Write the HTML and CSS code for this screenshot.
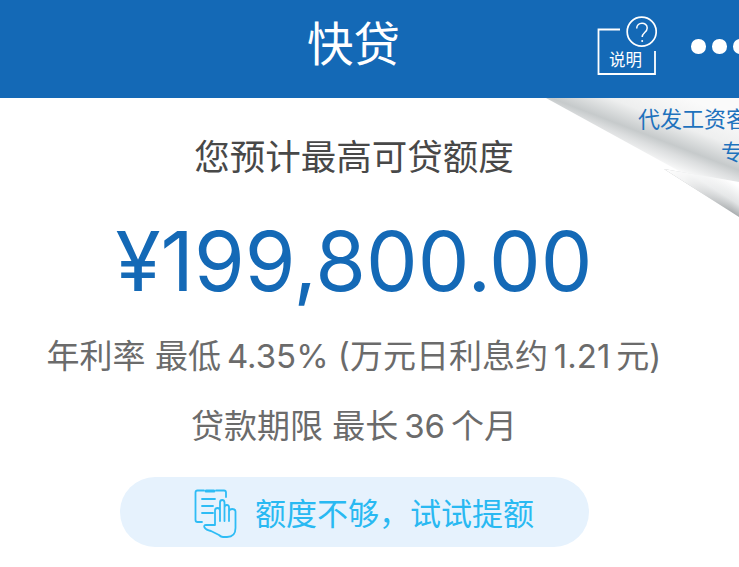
FILE: index.html
```html
<!DOCTYPE html>
<html lang="zh">
<head>
<meta charset="utf-8">
<title>快贷</title>
<link rel="stylesheet" href="styles.css">
</head>
<body>
<header class="bar">
  <h1 class="bar-title">快贷</h1>
  <div class="help">
    <svg class="help-icon" width="60" height="60" viewBox="0 0 60 60" fill="none" stroke="#fff">
      <path d="M23 13.500H1.500V58H58V35" stroke-width="1.800"/>
      <circle cx="44.700" cy="15.700" r="14.500" stroke-width="1.700"/>
      <path d="M39.700 12.500c0-7 10.500-7 10.500-.5 0 4.500-5 4.500-5 9" stroke-width="1.500"/>
      <circle cx="45.200" cy="25" r="1" fill="#fff" stroke="none"/>
    </svg>
    <span class="help-label">说明</span>
  </div>
  <div class="dots"><i></i><i></i><i></i></div>
</header>
<svg class="corner" width="193" height="125" viewBox="0 0 193 125">
  <defs>
    <linearGradient id="foldTop" gradientUnits="userSpaceOnUse" x1="114" y1="-10" x2="84" y2="68">
      <stop offset="0" stop-color="#fafafa"/>
      <stop offset=".33" stop-color="#eeefef"/>
      <stop offset=".58" stop-color="#c6cacb"/>
      <stop offset=".68" stop-color="#dcdedf"/>
      <stop offset=".88" stop-color="#fff"/>
    </linearGradient>
    <linearGradient id="foldLow" gradientUnits="userSpaceOnUse" x1="207" y1="97" x2="193" y2="119">
      <stop offset="0" stop-color="#fff"/>
      <stop offset=".6" stop-color="#e2e4e5"/>
      <stop offset="1" stop-color="#a9adaf"/>
    </linearGradient>
    <linearGradient id="foldFade" gradientUnits="userSpaceOnUse" x1="118" y1="0" x2="186" y2="0">
      <stop offset="0" stop-color="#fff"/>
      <stop offset=".3" stop-color="#fff" stop-opacity=".85"/>
      <stop offset="1" stop-color="#fff" stop-opacity="0"/>
    </linearGradient>
  </defs>
  <polygon points="0,0 193,0 193,106" fill="url(#foldTop)"/>
  <polygon points="118,71 193,84 193,119" fill="url(#foldLow)"/>
  <polygon points="118,71 193,84 193,119" fill="url(#foldFade)"/>
</svg>
<div class="corner-text">
  <p class="corner-line1">代发工资客户</p>
  <p class="corner-line2">专享</p>
</div>
<main class="content">
  <p class="lead">您预计最高可贷额度</p>
  <p class="amount">¥199,800.00</p>
  <p class="info info-rate">年利率 最低&#8201;4.35% (万元日利息约&#8201;1.21&#8201;元)</p>
  <p class="info info-term">贷款期限 最长&#8201;36&#8201;个月</p>
  <a class="raise">
    <svg class="raise-icon" width="44" height="50" viewBox="0 0 44 50" fill="none" stroke="#2ebcf5" stroke-width="1.800" stroke-linecap="round" stroke-linejoin="round">
      <path d="M10 1.500H3.500Q1.500 1.500 1.500 3.500V31Q1.500 33 3.500 33H8"/>
      <path d="M22 1.500H30Q32 1.500 32 3.500V8"/>
      <path d="M12 2H20" stroke-width="3"/>
      <path d="M8 10H21M8 17H19M8 24H19"/>
      <path d="M21 36V21.500Q21 19 23.500 19T26 21.500V32M26 21V13.500Q26 11 28.200 11T30.500 13.500V32M30.500 18.500Q30.500 16 32.800 16T35 18.500V32M35 22.500Q35 20 38.200 20T41.500 22.500V39Q41.500 48 33 48H29Q27 48 25 46L17 42Q12 41 10.500 38.500 9.500 36 12 36H21"/>
    </svg>
    <span class="raise-text">额度不够，试试提额</span>
  </a>
</main>
</body>
</html>
```
FILE: styles.css
```css
* { box-sizing: border-box; }
html, body {
  margin: 0;
  width: 739px;
  height: 567px;
  overflow: hidden;
  background: #fff;
  font-family: "Inter", "Noto Sans CJK SC", sans-serif;
}
p, h1 { margin: 0; font-weight: 400; }

.bar {
  position: relative;
  height: 98px;
  background: #1469b6;
  color: #fff;
}
.bar-title {
  position: absolute;
  left: 0;
  width: 707px;
  top: 11px;
  text-align: center;
  font-family: "Noto Sans CJK SC", sans-serif;
  font-size: 46.500px;
  line-height: 60px;
  font-weight: 400;
}
.help {
  position: absolute;
  left: 597px;
  top: 16px;
  width: 60px;
  height: 60px;
}
.help-icon { display: block; }
.help-label {
  position: absolute;
  left: 12px;
  top: 33px;
  font-family: "Noto Sans CJK SC", sans-serif;
  font-size: 16.500px;
  line-height: 20px;
  white-space: nowrap;
}
.dots {
  position: absolute;
  left: 691px;
  top: 39px;
  display: flex;
  gap: 6.500px;
}
.dots i {
  display: block;
  flex: none;
  width: 14.500px;
  height: 14.500px;
  border-radius: 50%;
  background: #fff;
}

.corner {
  position: absolute;
  left: 546px;
  top: 98px;
}
.corner-text {
  position: absolute;
  left: 638px;
  top: 102px;
  width: 101px;
  overflow: hidden;
  color: #1e72bd;
  font-family: "Noto Sans CJK SC", sans-serif;
  font-size: 22px;
  line-height: 30px;
  white-space: nowrap;
}
.corner-line2 { margin-top: 3px; padding-left: 83px; }

.content {
  width: 708px;
  display: flex;
  flex-direction: column;
  align-items: center;
}
.lead {
  margin-top: 33px;
  font-family: "Noto Sans CJK SC", sans-serif;
  font-size: 35.500px;
  line-height: 48px;
  color: #484848;
}
.amount {
  margin-top: 38px;
  font-size: 82px;
  line-height: 90px;
  color: #1469b6;
  white-space: nowrap;
}
.info {
  font-size: 33px;
  line-height: 44px;
  color: #6b6b6b;
  white-space: nowrap;
}
.info-rate { margin-top: 27px; }
.info-term { margin-top: 26px; }
.raise {
  display: flex;
  align-items: center;
  justify-content: center;
  gap: 17px;
  margin-top: 29px;
  width: 469px;
  height: 70px;
  padding-left: 20px;
  border-radius: 35px;
  background: #e6f2fd;
  color: #29b9f2;
}
.raise-icon { flex: none; margin-top: 4px; }
.raise-text {
  font-family: "Noto Sans CJK SC", sans-serif;
  font-size: 31px;
  line-height: 40px;
}
```
